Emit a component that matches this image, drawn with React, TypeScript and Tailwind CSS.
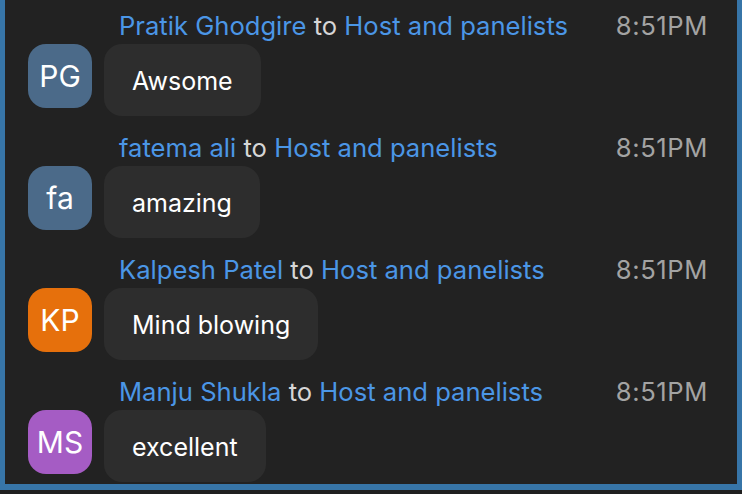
import React from 'react'

interface Message {
  initials: string
  name: string
  text: string
  avatar: string
}

const messages: Message[] = [
  { initials: 'PG', name: 'Pratik Ghodgire', text: 'Awsome', avatar: 'bg-[#4b6a89]' },
  { initials: 'fa', name: 'fatema ali', text: 'amazing', avatar: 'bg-[#4b6a89]' },
  { initials: 'KP', name: 'Kalpesh Patel', text: 'Mind blowing', avatar: 'bg-[#e6700c]' },
  { initials: 'MS', name: 'Manju Shukla', text: 'excellent', avatar: 'bg-[#a55cc4]' },
]

function ChatRow({ msg }: { msg: Message }) {
  return (
    <div className="h-[122px] pt-[11px]">
      <div className="flex items-center justify-between pl-[114px] pr-[29px] h-[30px] text-[25.6px] leading-[30px]">
        <p className="text-[#4b96e6]">
          {msg.name}
          <span className="text-[#d6d6d6]"> to </span>
          Host and panelists
        </p>
        <span className="text-[#a3a3a3] tracking-[0.6px]">8:51PM</span>
      </div>
      <div className="flex items-start gap-3 mt-[3px] pl-[23px]">
        <div
          className={`w-16 h-16 rounded-[18px] flex items-center justify-center text-white text-[30px] ${msg.avatar}`}
        >
          {msg.initials}
        </div>
        <div className="h-[72px] rounded-[18px] bg-[#2d2d2d] px-7 pt-[3px] flex items-center text-white text-[25px]">
          {msg.text}
        </div>
      </div>
    </div>
  )
}

export default function App() {
  return (
    <div
      className="w-[742px] h-[494px] bg-[#1f1f1f] overflow-hidden"
      style={{ fontFamily: 'Inter, "Noto Sans", sans-serif' }}
    >
      <div className="h-[490px] bg-[#222222] border-l-[5px] border-r-[5px] border-b-[6px] border-[#3775a8]">
        {messages.map((m) => (
          <ChatRow key={m.name} msg={m} />
        ))}
      </div>
    </div>
  )
}
